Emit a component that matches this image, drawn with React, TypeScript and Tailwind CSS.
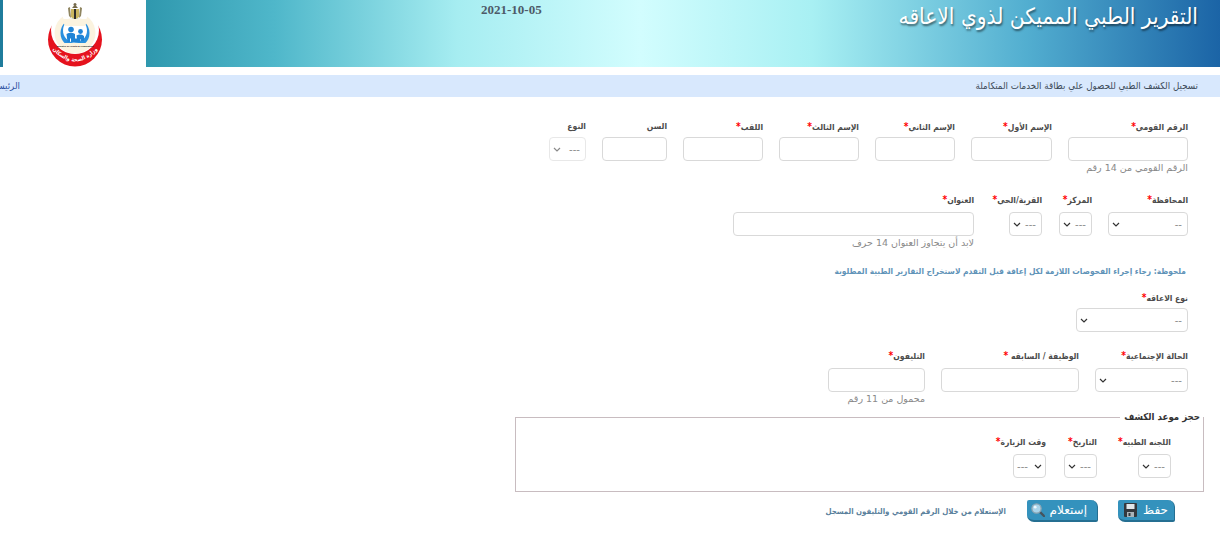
import React from "react";

const F = "[font-family:'DejaVu_Sans_Condensed','DejaVu_Sans',sans-serif]";

function Label({ text, req }: { text: string; req?: boolean }) {
  return (
    <div className="h-[13px] leading-[13px] text-[8.5px] font-bold text-[#4c4c4c] whitespace-nowrap">
      {text}
      {req && <span className="text-[#f00] text-[10px]">*</span>}
    </div>
  );
}

function TextField({ label, req, w, help, gap = "mt-[6px]" }: { label: string; req?: boolean; w: string; help?: string; gap?: string }) {
  return (
    <div className={w}>
      <Label text={label} req={req} />
      <input className={"block w-full h-[24px] bg-white border border-[#d9d9d9] rounded-[4px] " + gap} />
      {help && <div className="text-[9.5px] leading-[14px] text-[#8a8a8a] whitespace-nowrap [font-family:'DejaVu_Sans',sans-serif]">{help}</div>}
    </div>
  );
}

function SelectField({ label, req, w, opt = "---", ltr, dim, gap = "mt-[6px]" }: { label: string; req?: boolean; w: string; opt?: string; ltr?: boolean; dim?: boolean; gap?: string }) {
  return (
    <div className={w}>
      <Label text={label} req={req} />
      <div className={"relative " + gap}>
        <select
          dir={ltr ? "ltr" : "rtl"}
          className={
            "block w-full h-[24px] appearance-none bg-white border rounded-[4px] text-[11px] text-[#8c8c8c] [font-family:'Liberation_Sans',sans-serif] " +
            (ltr ? "pl-[3px] pr-[10px] " : "pr-[5px] pl-[10px] ") +
            (dim ? "border-[#e8e8e8]" : "border-[#d9d9d9]")
          }
        >
          <option>{opt}</option>
        </select>
        <svg
          width="8"
          height="5"
          viewBox="0 0 8 5"
          className={"absolute top-[10px] pointer-events-none " + (ltr ? "right-[4px]" : "left-[4px]")}
        >
          <path d="M1 1 L4 4 L7 1" fill="none" stroke={dim ? "#8a8a8a" : "#333"} strokeWidth="1.2" />
        </svg>
      </div>
    </div>
  );
}

function Logo() {
  return (
    <svg width="62" height="68" viewBox="0 0 62 68" className="block">
      <defs>
        <path id="lg-low" d="M9 50 Q31 73 53 50" />
      </defs>
      <circle cx="31" cy="39.5" r="27" fill="#e5121d" />
      <circle cx="31" cy="30" r="24" fill="#fff" />
      <circle cx="31" cy="33" r="20.5" fill="#fbf3df" />
      <path d="M16 10 H46 L42 20 Q31 16 20 20 Z" fill="#fff" />
      <circle cx="31" cy="33" r="14.5" fill="#2a90de" />
      <circle cx="31" cy="30.5" r="12" fill="#fff" />
      <path d="M18 19 H44 L41 26 H21 Z" fill="#fbf3df" />
      <rect x="17" y="43" width="28" height="6" fill="#fbf3df" />
      <circle cx="27" cy="29.5" r="2.8" fill="#1f84d6" />
      <circle cx="36.5" cy="31.5" r="2.4" fill="#1f84d6" />
      <path d="M22.5 34 Q27 31.5 31 34 V42 H27 V38.5 H26 V42 H23.5 Z" fill="#1f84d6" />
      <path d="M32.5 35.5 Q36.5 33.5 40 36 V41 H37 V39 H33 Z" fill="#1f84d6" />
      <rect x="30.5" y="38.5" width="6" height="4" fill="#1f84d6" />
      <text x="31" y="47" fontSize="2.5" fontWeight="700" fill="#222" fontFamily="Liberation Sans, sans-serif" textAnchor="middle">
        Ministry of Health &amp; Population
      </text>
      <text direction="rtl" fontSize="5.5" fontWeight="700" fill="#fff" textAnchor="middle" fontFamily="DejaVu Sans Condensed, sans-serif">
        <textPath href="#lg-low" startOffset="50%">وزارة الصحة والسكان</textPath>
      </text>
      <path d="M27 9 h8 v8 q-4 4 -8 0 z" fill="#c9b560" />
      <path d="M30 9 h2 v10 h-2 z" fill="#2c2c2c" />
      <path d="M28 8 q3 -5 6 0 z" fill="#74694a" />
      <circle cx="31" cy="4.5" r="1.5" fill="#74694a" />
      <path d="M26 7 l1 11 l-2 -2 l-1 -8 z M36 7 l-1 11 l2 -2 l1 -8 z" fill="#8f8560" />
    </svg>
  );
}

function Floppy() {
  return (
    <svg width="13" height="14" viewBox="0 0 13 14">
      <rect x="0" y="0" width="13" height="14" rx="1" fill="#33383e" />
      <rect x="2.5" y="1" width="8" height="5" fill="#dfe6ea" />
      <rect x="3" y="9" width="7" height="5" fill="#aab4bb" />
      <rect x="4.5" y="10" width="2" height="3" fill="#33383e" />
    </svg>
  );
}

function Magnifier() {
  return (
    <svg width="14" height="14" viewBox="0 0 14 14">
      <path d="M8.5 8.5 L13 13" stroke="#46535c" strokeWidth="2.4" strokeLinecap="round" />
      <circle cx="5.5" cy="5.5" r="4.6" fill="#a9d4ea" stroke="#8fa6b3" strokeWidth="1.3" />
      <circle cx="4.2" cy="4.2" r="1.4" fill="#eef8fc" />
    </svg>
  );
}

function ActionButton({ text, icon, cls }: { text: string; icon: React.ReactNode; cls: string }) {
  return (
    <button className={"h-[22px] bg-[#3492bd] text-white text-[12px] flex items-center rounded-tl-[2px] rounded-tr-[7px] rounded-bl-[7px] rounded-br-[2px] border-r border-b-2 border-[#256f92] [font-family:'DejaVu_Sans',sans-serif] " + cls}>
      <span className="leading-none">{text}</span>
      {icon}
    </button>
  );
}

export default function App() {
  return (
    <div className={"w-[1220px] h-[550px] overflow-hidden bg-white " + F}>
      <header className="flex h-[67px]">
        <div className="w-[3px] bg-[#1f7c9c]" />
        <div className="w-[143px] bg-white flex justify-center">
          <Logo />
        </div>
        <div className="flex-1 bg-[linear-gradient(90deg,#2f98ae_0%,#4fb7ca_12%,#a6edf1_29%,#d2fdfe_46%,#a8f0f3_62%,#52aed0_82%,#1b64a6_100%)]">
          <div className="flex h-full items-start justify-between pr-[22px]">
            <div className="ml-[335px] text-[13px] font-bold text-[#4d5a68] [font-family:'Liberation_Serif',serif]">2021-10-05</div>
            <div dir="rtl" className="text-[22.5px] leading-[28px] mt-[2px] text-white [text-shadow:1px_2px_2px_rgba(0,0,0,0.5)] whitespace-nowrap">
              التقرير الطبي المميكن لذوي الاعاقه
            </div>
          </div>
        </div>
      </header>
      <nav className="mt-[8px] h-[22px] bg-[#d8e8fd] flex items-center justify-between pr-[22px] text-[9.7px] text-[#3c4a58] overflow-hidden">
        <span dir="rtl" className="text-[#2c4fa0] w-[20px] overflow-hidden whitespace-nowrap">الرئيسية</span>
        <span dir="rtl">تسجيل الكشف الطبي للحصول علي بطاقة الخدمات المتكاملة</span>
      </nav>
      <main dir="rtl" className="pr-[32px] pt-[23px]">
        <div className="flex gap-[16px] h-[60px]">
          <TextField gap="mt-[4px]" w="w-[120px]" label="الرقم القومي" req help="الرقم القومي من 14 رقم" />
          <TextField gap="mt-[4px]" w="w-[81px]" label="الإسم الأول" req />
          <TextField gap="mt-[4px]" w="w-[80px]" label="الإسم الثاني" req />
          <TextField gap="mt-[4px]" w="w-[80px]" label="الإسم الثالث" req />
          <TextField gap="mt-[4px]" w="w-[80px]" label="اللقب" req />
          <TextField gap="mt-[4px]" w="w-[65px]" label="السن" />
          <SelectField gap="mt-[4px]" w="w-[37px]" label="النوع" dim />
        </div>
        <div className="flex mt-[13px] h-[60px]">
          <SelectField w="w-[80px] ml-[16px]" label="المحافظة" req opt="--" />
          <SelectField w="w-[33px] ml-[17px]" label="المركز" req />
          <SelectField w="w-[33px] ml-[35px]" label="القرية/الحي" req />
          <TextField w="w-[241px]" label="العنوان" req help="لابد أن يتجاوز العنوان 14 حرف" />
        </div>
        <div className="mt-[11px] mr-[2px] text-[8.3px] leading-[14px] font-bold text-[#5f93b8] whitespace-nowrap">
          ملحوظة: رجاء إجراء الفحوصات اللازمة لكل إعاقة قبل التقدم لاستخراج التقارير الطبية المطلوبة
        </div>
        <div className="mt-[13px]">
          <SelectField gap="mt-[4px]" w="w-[112px]" label="نوع الاعاقه" req opt="--" />
        </div>
        <div className="flex mt-[17px] h-[58px]">
          <SelectField w="w-[93px] ml-[16px]" label="الحالة الإجتماعية" req />
          <TextField w="w-[138px] ml-[16px]" label="الوظيفة / السابقه " req />
          <TextField w="w-[97px]" label="التليفون" req help="محمول من 11 رقم" />
        </div>
        <fieldset className="-mr-[16px] mt-[2px] w-[689px] h-[83px] border border-[#c8bcc0] p-0">
          <legend className="text-[9.6px] leading-[16px] font-bold text-[#333] pr-[3px] pl-[4px]">حجز موعد الكشف</legend>
          <div className="flex mt-[10px] pr-[32px]">
            <SelectField w="w-[33px] ml-[41px]" label="اللجنه الطبيه" req />
            <SelectField w="w-[33px] ml-[18px]" label="التاريخ" req />
            <SelectField w="w-[33px]" ltr label="وقت الزيارة" req />
          </div>
        </fieldset>
        <div className="flex items-center mt-[8px] mr-[13px]">
          <ActionButton cls="w-[57px] ml-[20px] gap-[6px] pr-[6px]" text="حفظ" icon={<Floppy />} />
          <ActionButton cls="w-[71px] ml-[21px] gap-[5px] pr-[10px]" text="إستعلام" icon={<Magnifier />} />
          <span className="text-[7.8px] font-bold text-[#5a7f9c] mt-[2px]">الإستعلام من خلال الرقم القومي والتليفون المسجل</span>
        </div>
      </main>
    </div>
  );
}
